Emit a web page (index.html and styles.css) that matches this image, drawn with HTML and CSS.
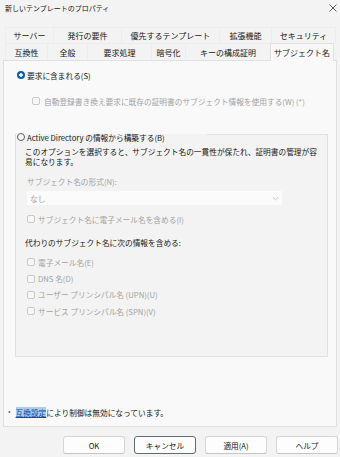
FILE: index.html
```html
<!DOCTYPE html>
<html lang="ja">

    <head>
        <meta charset="UTF-8">
        <meta name="viewport" content="width=device-width, initial-scale=1.0">
        <title>新しいテンプレートのプロパティ</title>
        <link rel="stylesheet" href="styles.css">
    </head>

    <body>
        <div class="titlebar">
            <span>新しいテンプレートのプロパティ</span>
            <svg class="close" width="8" height="8" viewBox="0 0 8 8">
                <path d="M0.5 0.5L7.5 7.5M7.5 0.5L0.5 7.5" stroke="#333" stroke-width="0.8" fill="none"/>
            </svg>
        </div>

        <div class="tabs">
            <div class="tab-row first">
                <div class="tab">サーバー</div>
                <div class="tab">発行の要件</div>
                <div class="tab">優先するテンプレート</div>
                <div class="tab">拡張機能</div>
                <div class="tab">セキュリティ</div>
            </div>
            <div class="tab-row second">
                <div class="tab">互換性</div>
                <div class="tab">全般</div>
                <div class="tab">要求処理</div>
                <div class="tab">暗号化</div>
                <div class="tab">キーの構成証明</div>
                <div class="tab active">サブジェクト名</div>
            </div>
        </div>

        <div class="panel">
            <label class="option">
                <span class="radio checked"></span>
                要求に含まれる(S)
            </label>
            <label class="check sub disabled">
                <span class="box"></span>
                自動登録書き換え要求に既存の証明書のサブジェクト情報を使用する(W) (*)
            </label>

            <fieldset class="group">
                <legend class="option">
                    <span class="radio"></span>
                    Active Directory の情報から構築する(B)
                </legend>
                <p class="desc">このオプションを選択すると、サブジェクト名の一貫性が保たれ、証明書の管理が容易になります。</p>
                <div class="field-label disabled">サブジェクト名の形式(N):</div>
                <div class="select disabled">
                    <span>なし</span>
                    <svg width="7" height="5" viewBox="0 0 7 5">
                        <path d="M0.8 1.2L3.5 3.8L6.2 1.2" stroke="#b5b5b5" stroke-width="0.8" fill="none"/>
                    </svg>
                </div>
                <label class="check disabled mail">
                    <span class="box"></span>
                    サブジェクト名に電子メール名を含める(I)
                </label>

                <div class="alt-title">代わりのサブジェクト名に次の情報を含める:</div>
                <div class="alt-list">
                    <label class="check disabled"><span class="box"></span>電子メール名(E)</label>
                    <label class="check disabled"><span class="box"></span>DNS 名(D)</label>
                    <label class="check disabled"><span class="box"></span>ユーザー プリンシパル名 (UPN)(U)</label>
                    <label class="check disabled"><span class="box"></span>サービス プリンシパル名 (SPN)(V)</label>
                </div>
            </fieldset>

            <p class="note"><span class="star">*</span> <a href="#" class="link">互換設定</a>により制御は無効になっています。</p>
        </div>

        <div class="buttons">
            <button type="button">OK</button>
            <button type="button" class="focused">キャンセル</button>
            <button type="button">適用(A)</button>
            <button type="button">ヘルプ</button>
        </div>
    </body>

</html>
```

FILE: styles.css
```css
body {
    margin: 0;
    width: 340px;
    height: 457px;
    overflow: hidden;
    background: #f3f3f3;
    color: #161616;
    font-family: "Noto Sans CJK JP", "Noto Sans", sans-serif;
    font-size: 7.7px;
}

.titlebar {
    height: 16px;
    display: flex;
    align-items: center;
    justify-content: space-between;
    padding: 0 3px 0 5px;
    font-size: 7px;
}

.tabs {
    padding: 11px 3px 0 5px;
}

.tab-row {
    display: grid;
    height: 16px;
    font-size: 8px;
}

.tab-row.first {
    grid-template-columns: 48px 68px 98px 52px 64px;
}

.tab-row.second {
    grid-template-columns: 42px 40px 64px 34px 85px 63px;
    height: 17px;
}

.tab {
    display: flex;
    align-items: center;
    justify-content: center;
    border: 1px solid #ededed;
    border-bottom: none;
    margin-right: -1px;
}

.tab.active {
    position: relative;
    z-index: 1;
    background: #f9f9f9;
    border-color: #e0e0e0;
    margin-bottom: -1px;
}

.panel {
    display: flex;
    flex-direction: column;
    box-sizing: border-box;
    height: 367px;
    margin: 0 3px;
    padding: 8px 8px 7px 13px;
    background: #f9f9f9;
    border: 1px solid #e0e0e0;
}

.option {
    display: flex;
    align-items: center;
    gap: 2px;
    height: 12px;
}

.radio {
    display: inline-block;
    box-sizing: border-box;
    width: 8px;
    height: 8px;
    border: 1px solid #5c5c5c;
    border-radius: 50%;
    background: #fbfbfb;
}

.radio.checked {
    border: none;
    background: radial-gradient(circle, #fff 0 1.5px, #0a5fb4 2px);
}

.check {
    display: flex;
    align-items: center;
    gap: 3px;
    height: 12px;
}

.box {
    display: inline-block;
    box-sizing: border-box;
    width: 8px;
    height: 8px;
    border: 1px solid #c8c8c8;
    border-radius: 2px;
    background: #f7f7f7;
}

.disabled {
    color: #a2a2a2;
}

.check.sub {
    margin: 14px 0 0 15px;
    gap: 4px;
}

.group {
    margin: 18px 0 0 -2px;
    padding: 4px 8px 36px 9px;
    border: 1px solid #e0e0e0;
    background: #f3f3f3;
}

.group legend {
    box-sizing: border-box;
    width: 191px;
    margin-left: -9px;
    padding: 6px 0 0 1px;
    height: 18px;
}

.desc {
    margin: 0;
    line-height: 10px;
    word-break: break-all;
}

.field-label {
    margin: 9px 0 0 2px;
    height: 12px;
    line-height: 12px;
}

.select {
    display: flex;
    align-items: center;
    justify-content: space-between;
    box-sizing: border-box;
    width: 255px;
    height: 14px;
    margin: 3px 0 0 2px;
    padding: 0 3px;
    background: #fbfbfb;
}

.check.mail {
    margin: 8px 0 0 2px;
}

.alt-title {
    margin-top: 12px;
    height: 12px;
    line-height: 12px;
}

.alt-list {
    margin: 5px 0 0 2px;
}

.alt-list .check {
    height: 16.4px;
}

.note {
    margin: auto 0 0 -9px;
    height: 12px;
    line-height: 12px;
}

.star {
    font-size: 6px;
    margin-right: 3px;
}

.link {
    color: #0b4ea2;
    background: #a9cdf0;
    text-decoration: underline;
}

.buttons {
    display: flex;
    justify-content: flex-end;
    gap: 9px;
    padding: 9px 2px 0 0;
}

button {
    width: 62px;
    height: 18px;
    padding: 0;
    background: #fdfdfd;
    border: 1px solid #d6d6d6;
    border-bottom-color: #c4c4c4;
    border-radius: 3px;
    font-family: inherit;
    font-size: 7.7px;
    color: #161616;
}

button.focused {
    border: 1px solid #5f6a75;
}
```
